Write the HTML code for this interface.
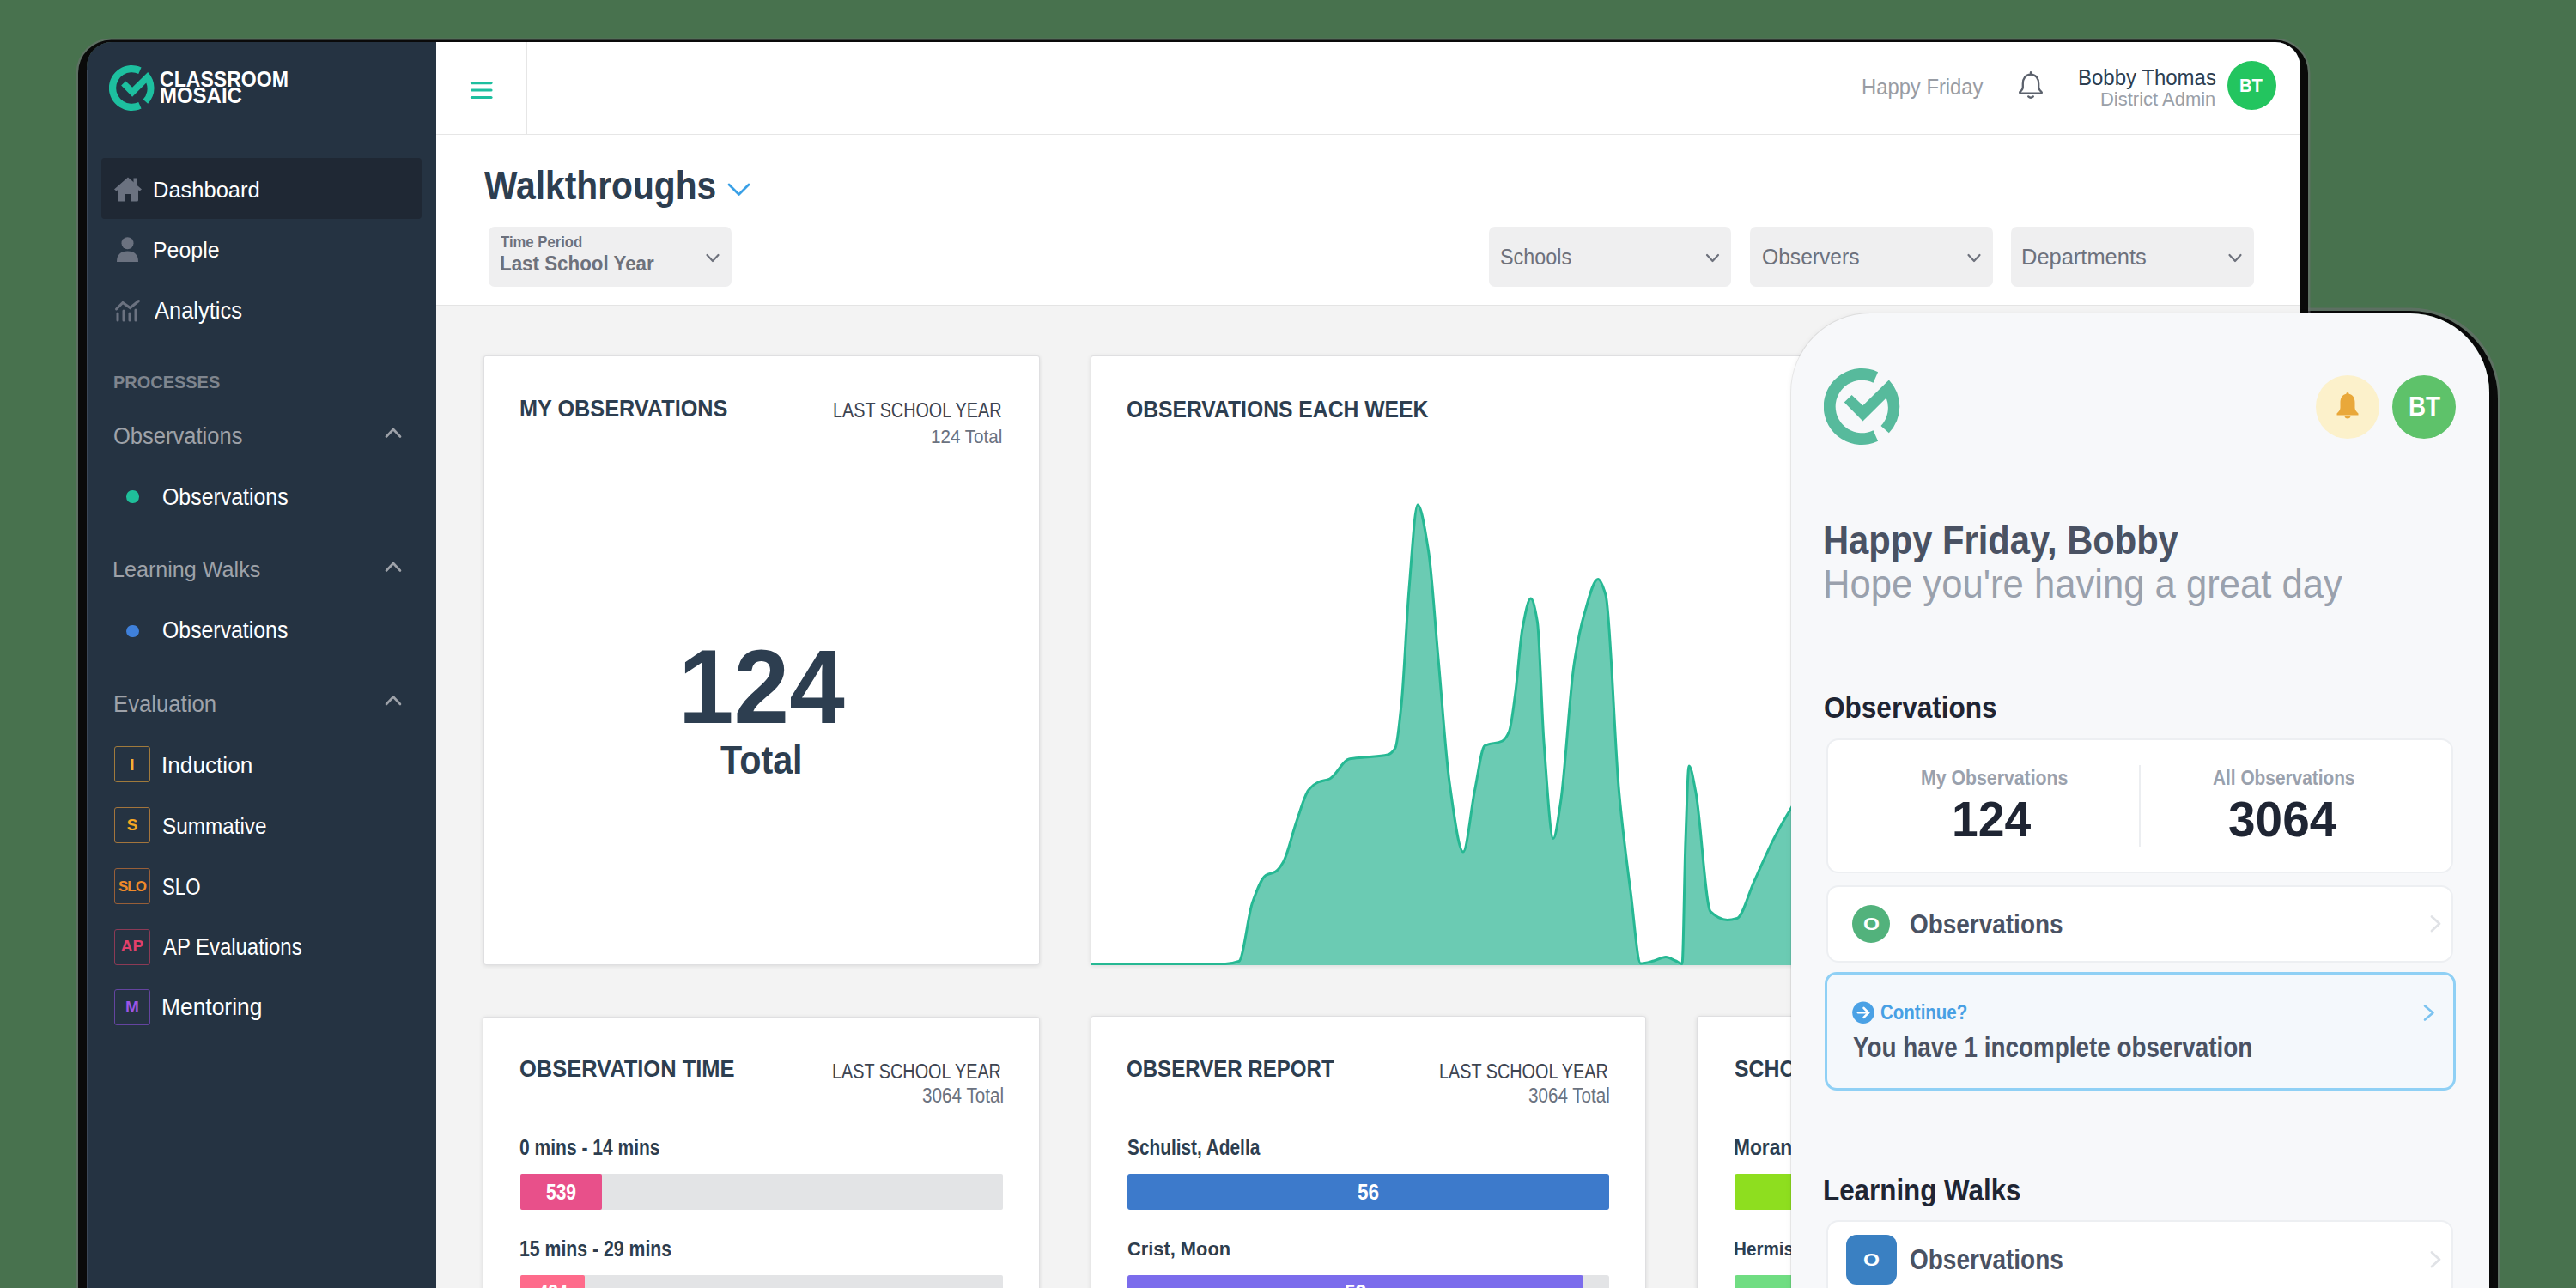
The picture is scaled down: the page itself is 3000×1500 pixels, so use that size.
<!DOCTYPE html>
<html><head><meta charset="utf-8">
<style>
html,body{margin:0;padding:0}
body{width:3000px;height:1500px;background:#48724e;position:relative;overflow:hidden;font-family:"Liberation Sans",sans-serif}
.a{position:absolute}
.t{position:absolute;white-space:nowrap;line-height:1;transform-origin:0 0}
.card{position:absolute;background:#fff;border:1px solid #dfdfe1;box-sizing:border-box;border-radius:3px;box-shadow:0 1px 5px rgba(0,0,0,0.10)}
.dd{position:absolute;background:#efeff0;border-radius:7px;top:263.5px;height:70px}
.box{position:absolute;left:133px;width:42px;height:42px;box-sizing:border-box;border:1.6px solid;border-radius:3px;font-weight:bold;text-align:center}
.mc{position:absolute;background:#fff;border:2.5px solid #edeff2;box-sizing:border-box;border-radius:14px}
</style></head>
<body>
<!-- shadows -->
<div class="a" style="left:2086px;top:365px;width:813px;height:1400px;border-radius:92px;box-shadow:0 7px 0 10px #0a0a0a,0 6px 0.5px 12.5px rgba(112,112,115,0.55)"></div>
<div class="a" style="left:101px;top:49px;width:2578px;height:1600px;border-radius:29px;box-shadow:-0.5px 7px 0 9.5px #0a0a0a,-0.5px 7.5px 0.5px 12px rgba(112,112,115,0.55)"></div>
<!-- desktop window -->
<div class="a" style="left:101px;top:49px;width:2578px;height:1600px;border-radius:29px;overflow:hidden;background:#253342">
  <div class="a" style="left:407px;top:300px;width:2171px;height:1300px;background:#f3f3f3"></div>
  <div class="a" style="left:0;top:32px;width:1px;height:1600px;background:#3b4757"></div>
  <div class="a" style="left:17px;top:135px;width:373px;height:71px;background:#1f2834;border-radius:4px"></div>
  <div class="a" style="left:407px;top:0;width:2171px;height:306px;background:#fff;border-bottom:1px solid #e4e4e4"></div>
  <div class="a" style="left:407px;top:107px;width:2171px;height:1px;background:#e6e6e6"></div>
  <div class="a" style="left:512px;top:0;width:1px;height:108px;background:#e6e6e6"></div>
</div>
<!-- logo -->
<svg class="a" style="left:127px;top:76px" width="53" height="53" viewBox="0 0 100 100">
 <g fill="#1dbf9f">
  <path d="M70.9,4.7 A50,50 0 1 0 70.9,95.3 L64.7,81.3 A34.6,34.6 0 1 1 64.7,18.7 Z"/>
  <path d="M26.7,44.5 L36.6,34.7 L51.1,48.7 L85.2,15.2 A50,50 0 0 1 85.2,84.6 L74.7,75.2 A34.6,34.6 0 0 0 81.7,38.8 L51.1,69.2 Z"/>
 </g>
</svg>
<!-- nav icons -->
<svg class="a" style="left:132px;top:205px" width="34" height="30" viewBox="0 0 34 30">
 <g fill="#6b7280">
  <path d="M1,15.5 L17,1.5 L33,15.5 L30.5,17.5 L17,6 L3.5,17.5 Z"/>
  <rect x="23.5" y="2.5" width="4.5" height="9"/>
  <path d="M5,14 L17,4 L29,14 L29,28 Q29,29.5 27.5,29.5 L21,29.5 L21,21 L13,21 L13,29.5 L6.5,29.5 Q5,29.5 5,28 Z"/>
 </g>
</svg>
<svg class="a" style="left:135px;top:276px" width="28" height="30" viewBox="0 0 28 30">
 <g fill="#6b7280"><circle cx="13.5" cy="7.3" r="7"/><path d="M1,29 Q1,16.5 13.5,16.5 Q26,16.5 26,29 Z"/></g>
</svg>
<svg class="a" style="left:133px;top:348px" width="32" height="28" viewBox="0 0 32 28">
 <g stroke="#6b7280" stroke-width="3" stroke-linecap="round" fill="none">
  <polyline points="2.5,12 10,4.5 18.5,10.5 28.5,2.5"/>
  <line x1="4" y1="17" x2="4" y2="25"/><line x1="11" y1="14" x2="11" y2="25"/><line x1="18" y1="17" x2="18" y2="25"/><line x1="25" y1="13" x2="25" y2="25"/>
 </g>
</svg>
<!-- sidebar chevrons -->
<svg class="a" style="left:446px;top:496px" width="24" height="340" viewBox="0 0 24 340">
 <g stroke="#9ea2a9" stroke-width="2.6" fill="none" stroke-linecap="round" stroke-linejoin="round">
  <polyline points="4,12.5 12,4 20,12.5"/>
  <polyline points="4,168.5 12,160 20,168.5"/>
  <polyline points="4,324 12,315.5 20,324"/>
 </g>
</svg>
<div class="a" style="left:147px;top:571px;width:14.5px;height:14.5px;border-radius:50%;background:#1fbf9a"></div>
<div class="a" style="left:147px;top:727.5px;width:14.5px;height:14.5px;border-radius:50%;background:#3f80da"></div>
<!-- eval boxes -->
<div class="box" style="top:868.7px;border-color:#a07a3c;color:#f2b233"></div>
<div class="box" style="top:940px;border-color:#a3753c;color:#f5a623"></div>
<div class="box" style="top:1010.6px;border-color:#985f38;color:#ee8a2a"></div>
<div class="box" style="top:1081.7px;border-color:#8c3a55;color:#e0406a"></div>
<div class="box" style="top:1151.8px;border-color:#6444a0;color:#9b55e6"></div>
<!-- hamburger -->
<svg class="a" style="left:545px;top:93px" width="31" height="24" viewBox="0 0 31 24">
 <g stroke="#1dbf9f" stroke-width="3.2" stroke-linecap="round"><line x1="4.5" y1="3.6" x2="27" y2="3.6"/><line x1="4.5" y1="12" x2="27" y2="12"/><line x1="4.5" y1="20.5" x2="27" y2="20.5"/></g>
</svg>
<!-- walkthroughs chevron -->
<svg class="a" style="left:846px;top:212px" width="30" height="19" viewBox="0 0 30 19">
 <polyline points="3,3 14.5,14.5 26,3" stroke="#3aa0e6" stroke-width="2.8" fill="none" stroke-linecap="round" stroke-linejoin="round"/>
</svg>
<!-- dropdowns -->
<div class="dd" style="left:569px;width:282.5px"></div>
<div class="dd" style="left:1734px;width:282.3px"></div>
<div class="dd" style="left:2038px;width:283px"></div>
<div class="dd" style="left:2342px;width:283px"></div>
<svg class="a" style="left:0;top:0" width="3000" height="340" viewBox="0 0 3000 340">
 <g stroke="#6d717c" stroke-width="2.2" fill="none" stroke-linecap="round" stroke-linejoin="round">
  <polyline points="823.5,297 830,304 836.5,297"/>
  <polyline points="1988,297 1994.5,304 2001,297"/>
  <polyline points="2292.5,297 2299,304 2305.5,297"/>
  <polyline points="2596.5,297 2603,304 2609.5,297"/>
 </g>
 <!-- bell -->
 <g stroke="#5b616c" stroke-width="2.3" fill="none" stroke-linecap="round" stroke-linejoin="round">
  <path d="M2365,86.6 C2359,86.6 2355.8,91.5 2355.8,97.5 L2355.8,101.5 C2355.8,104 2354.3,105.5 2352.5,107 C2351.8,107.6 2352.2,108.6 2353.2,108.6 L2376.8,108.6 C2377.8,108.6 2378.2,107.6 2377.5,107 C2375.7,105.5 2374.2,104 2374.2,101.5 L2374.2,97.5 C2374.2,91.5 2371,86.6 2365,86.6 Z"/>
  <line x1="2365" y1="84.2" x2="2365" y2="86.6"/>
  <path d="M2362.2,112.4 Q2365,115.2 2367.8,112.4"/>
 </g>
</svg>
<div class="a" style="left:2593.5px;top:71px;width:57px;height:57px;border-radius:50%;background:#23c55f"></div>
<!-- cards -->
<div class="card" style="left:562.5px;top:413.9px;width:648px;height:710.4px"></div>
<div class="card" style="left:1270px;top:413.9px;width:1353px;height:710.4px"></div>
<svg class="a" style="left:0;top:0" width="3000" height="1500" viewBox="0 0 3000 1500">
 <path d="M1270.0,1122.5 C1322.33,1122.50 1374.67,1122.50 1427.00,1122.50 C1432.27,1122.50 1437.53,1121.42 1442.80,1119.50 C1448.07,1117.58 1453.33,1065.62 1458.60,1051.00 C1463.73,1036.75 1468.87,1022.74 1474.00,1019.50 C1477.87,1017.06 1481.73,1017.34 1485.60,1015.00 C1488.60,1013.18 1491.60,1008.86 1494.60,1003.70 C1499.73,994.87 1504.87,970.84 1510.00,956.40 C1514.67,943.28 1519.33,925.69 1524.00,920.00 C1527.67,915.53 1531.33,912.61 1535.00,911.00 C1539.53,909.01 1544.07,908.98 1548.60,907.00 C1556.07,903.73 1563.53,885.45 1571.00,884.00 C1577.00,882.83 1583.00,882.67 1589.00,882.00 C1598.00,881.00 1607.00,881.04 1616.00,879.00 C1619.00,878.32 1622.00,875.90 1625.00,871.00 C1627.33,867.19 1629.67,843.25 1632.00,821.00 C1635.00,792.39 1638.00,721.70 1641.00,686.00 C1644.33,646.34 1647.67,588.00 1651.00,588.00 C1655.17,588.00 1659.33,615.37 1663.50,641.00 C1667.33,664.58 1671.17,724.78 1675.00,767.00 C1679.33,814.73 1683.67,880.50 1688.00,911.00 C1693.33,948.54 1698.67,992.00 1704.00,992.00 C1708.53,992.00 1713.07,942.03 1717.60,920.00 C1721.40,901.54 1725.20,870.72 1729.00,868.60 C1735.90,864.75 1742.80,866.49 1749.70,863.00 C1752.30,861.69 1754.90,858.00 1757.50,852.00 C1760.00,846.23 1762.50,824.06 1765.00,805.60 C1767.67,785.91 1770.33,746.02 1773.00,732.00 C1776.23,715.00 1779.47,697.00 1782.70,697.00 C1785.27,697.00 1787.83,708.86 1790.40,724.00 C1792.93,738.94 1795.47,829.89 1798.00,863.80 C1801.67,912.88 1805.33,976.40 1809.00,976.40 C1811.87,976.40 1814.73,952.31 1817.60,933.70 C1822.73,900.38 1827.87,808.51 1833.00,774.60 C1836.93,748.62 1840.87,729.52 1844.80,716.00 C1850.20,697.44 1855.60,674.50 1861.00,674.50 C1864.00,674.50 1867.00,682.85 1870.00,693.00 C1875.17,710.48 1880.33,866.05 1885.50,922.00 C1890.00,970.73 1894.50,1003.42 1899.00,1038.50 C1902.90,1068.90 1906.80,1122.00 1910.70,1122.00 C1915.80,1122.00 1920.90,1120.25 1926.00,1119.00 C1930.67,1117.86 1935.33,1114.50 1940.00,1114.50 C1943.83,1114.50 1947.67,1117.36 1951.50,1119.00 C1954.00,1120.07 1956.50,1122.50 1959.00,1122.50 C1960.33,1122.50 1961.67,1016.27 1963.00,980.00 C1964.33,943.73 1965.67,892.00 1967.00,892.00 C1969.60,892.00 1972.20,909.01 1974.80,922.00 C1980.53,950.65 1986.27,1056.25 1992.00,1061.70 C1998.53,1067.91 2005.07,1071.40 2011.60,1071.40 C2015.40,1071.40 2019.20,1070.59 2023.00,1069.50 C2029.57,1067.61 2036.13,1041.02 2042.70,1026.80 C2050.47,1009.98 2058.23,991.48 2066.00,976.40 C2072.20,964.36 2078.40,954.08 2084.60,943.40 C2093.07,928.81 2101.53,915.13 2110.00,901.00 L2110,1124 L1270,1124 Z" fill="#6bcbb3"/>
 <path d="M1270.0,1122.5 C1322.33,1122.50 1374.67,1122.50 1427.00,1122.50 C1432.27,1122.50 1437.53,1121.42 1442.80,1119.50 C1448.07,1117.58 1453.33,1065.62 1458.60,1051.00 C1463.73,1036.75 1468.87,1022.74 1474.00,1019.50 C1477.87,1017.06 1481.73,1017.34 1485.60,1015.00 C1488.60,1013.18 1491.60,1008.86 1494.60,1003.70 C1499.73,994.87 1504.87,970.84 1510.00,956.40 C1514.67,943.28 1519.33,925.69 1524.00,920.00 C1527.67,915.53 1531.33,912.61 1535.00,911.00 C1539.53,909.01 1544.07,908.98 1548.60,907.00 C1556.07,903.73 1563.53,885.45 1571.00,884.00 C1577.00,882.83 1583.00,882.67 1589.00,882.00 C1598.00,881.00 1607.00,881.04 1616.00,879.00 C1619.00,878.32 1622.00,875.90 1625.00,871.00 C1627.33,867.19 1629.67,843.25 1632.00,821.00 C1635.00,792.39 1638.00,721.70 1641.00,686.00 C1644.33,646.34 1647.67,588.00 1651.00,588.00 C1655.17,588.00 1659.33,615.37 1663.50,641.00 C1667.33,664.58 1671.17,724.78 1675.00,767.00 C1679.33,814.73 1683.67,880.50 1688.00,911.00 C1693.33,948.54 1698.67,992.00 1704.00,992.00 C1708.53,992.00 1713.07,942.03 1717.60,920.00 C1721.40,901.54 1725.20,870.72 1729.00,868.60 C1735.90,864.75 1742.80,866.49 1749.70,863.00 C1752.30,861.69 1754.90,858.00 1757.50,852.00 C1760.00,846.23 1762.50,824.06 1765.00,805.60 C1767.67,785.91 1770.33,746.02 1773.00,732.00 C1776.23,715.00 1779.47,697.00 1782.70,697.00 C1785.27,697.00 1787.83,708.86 1790.40,724.00 C1792.93,738.94 1795.47,829.89 1798.00,863.80 C1801.67,912.88 1805.33,976.40 1809.00,976.40 C1811.87,976.40 1814.73,952.31 1817.60,933.70 C1822.73,900.38 1827.87,808.51 1833.00,774.60 C1836.93,748.62 1840.87,729.52 1844.80,716.00 C1850.20,697.44 1855.60,674.50 1861.00,674.50 C1864.00,674.50 1867.00,682.85 1870.00,693.00 C1875.17,710.48 1880.33,866.05 1885.50,922.00 C1890.00,970.73 1894.50,1003.42 1899.00,1038.50 C1902.90,1068.90 1906.80,1122.00 1910.70,1122.00 C1915.80,1122.00 1920.90,1120.25 1926.00,1119.00 C1930.67,1117.86 1935.33,1114.50 1940.00,1114.50 C1943.83,1114.50 1947.67,1117.36 1951.50,1119.00 C1954.00,1120.07 1956.50,1122.50 1959.00,1122.50 C1960.33,1122.50 1961.67,1016.27 1963.00,980.00 C1964.33,943.73 1965.67,892.00 1967.00,892.00 C1969.60,892.00 1972.20,909.01 1974.80,922.00 C1980.53,950.65 1986.27,1056.25 1992.00,1061.70 C1998.53,1067.91 2005.07,1071.40 2011.60,1071.40 C2015.40,1071.40 2019.20,1070.59 2023.00,1069.50 C2029.57,1067.61 2036.13,1041.02 2042.70,1026.80 C2050.47,1009.98 2058.23,991.48 2066.00,976.40 C2072.20,964.36 2078.40,954.08 2084.60,943.40 C2093.07,928.81 2101.53,915.13 2110.00,901.00" fill="none" stroke="#26b893" stroke-width="3"/>
</svg>
<div class="card" style="left:562px;top:1183.5px;width:648.6px;height:400px"></div>
<div class="card" style="left:1269.8px;top:1183px;width:647.4px;height:400px"></div>
<div class="card" style="left:1976px;top:1183px;width:647px;height:400px"></div>
<!-- bars -->
<div class="a" style="left:606px;top:1367px;width:561.7px;height:41.5px;background:#e3e4e6;border-radius:2px"></div>
<div class="a" style="left:606px;top:1367px;width:95px;height:41.5px;background:#e8508a;border-radius:2px"></div>
<div class="a" style="left:606px;top:1484.5px;width:561.7px;height:41.5px;background:#e3e4e6;border-radius:2px"></div>
<div class="a" style="left:606px;top:1484.5px;width:75px;height:41.5px;background:#fe6b8b;border-radius:2px"></div>
<div class="a" style="left:1313px;top:1367px;width:561px;height:42.4px;background:#3d7acb;border-radius:3px"></div>
<div class="a" style="left:1313px;top:1485px;width:561px;height:42px;background:#e3e4e6;border-radius:3px"></div>
<div class="a" style="left:1313px;top:1485px;width:531px;height:42px;background:#7b6cec;border-radius:3px"></div>
<div class="a" style="left:2020px;top:1367px;width:200px;height:42.4px;background:#8ede1f;border-radius:3px"></div>
<div class="a" style="left:2020px;top:1485px;width:200px;height:42px;background:#70dd82;border-radius:3px"></div>
<div class="t" style="left:186.11px;top:79.63px;font-size:25.94px;font-weight:bold;color:#ffffff;transform:scaleX(0.8892);">CLASSROOM</div>
<div class="t" style="left:186.03px;top:100.36px;font-size:24.85px;font-weight:bold;color:#ffffff;transform:scaleX(0.9651);">MOSAIC</div>
<div class="t" style="left:177.84px;top:207.57px;font-size:26.02px;font-weight:normal;color:#ffffff;transform:scaleX(0.9795);">Dashboard</div>
<div class="t" style="left:178.12px;top:278.20px;font-size:26.45px;font-weight:normal;color:#ffffff;transform:scaleX(0.9420);">People</div>
<div class="t" style="left:180.00px;top:348.76px;font-size:26.74px;font-weight:normal;color:#ffffff;transform:scaleX(0.9521);">Analytics</div>
<div class="t" style="left:132.42px;top:434.77px;font-size:20.35px;font-weight:bold;color:#7f858e;transform:scaleX(0.9811);">PROCESSES</div>
<div class="t" style="left:132.45px;top:494.76px;font-size:26.74px;font-weight:normal;color:#9ea2a9;transform:scaleX(0.9549);">Observations</div>
<div class="t" style="left:189.10px;top:564.62px;font-size:27.62px;font-weight:normal;color:#ffffff;transform:scaleX(0.9014);">Observations</div>
<div class="t" style="left:131.11px;top:650.48px;font-size:26.60px;font-weight:normal;color:#9ea2a9;transform:scaleX(0.9450);">Learning Walks</div>
<div class="t" style="left:189.08px;top:721.23px;font-size:26.89px;font-weight:normal;color:#ffffff;transform:scaleX(0.9242);">Observations</div>
<div class="t" style="left:131.90px;top:806.71px;font-size:27.03px;font-weight:normal;color:#9ea2a9;transform:scaleX(0.9518);">Evaluation</div>
<div class="t" style="left:188.02px;top:877.60px;font-size:26.45px;font-weight:normal;color:#ffffff;transform:scaleX(0.9904);">Induction</div>
<div class="t" style="left:189.07px;top:948.77px;font-size:26.02px;font-weight:normal;color:#ffffff;transform:scaleX(0.9333);">Summative</div>
<div class="t" style="left:189.19px;top:1018.62px;font-size:27.62px;font-weight:normal;color:#ffffff;transform:scaleX(0.8053);">SLO</div>
<div class="t" style="left:190.00px;top:1089.44px;font-size:27.47px;font-weight:normal;color:#ffffff;transform:scaleX(0.8698);">AP Evaluations</div>
<div class="t" style="left:188.05px;top:1159.91px;font-size:27.03px;font-weight:normal;color:#ffffff;transform:scaleX(0.9769);">Mentoring</div>
<div class="t" style="left:2168.06px;top:88.89px;font-size:25.87px;font-weight:normal;color:#989ca4;transform:scaleX(0.9200);">Happy Friday</div>
<div class="t" style="left:2420.10px;top:78.39px;font-size:25.29px;font-weight:normal;color:#2d3e50;transform:scaleX(0.9487);">Bobby Thomas</div>
<div class="t" style="left:2446.39px;top:104.74px;font-size:21.80px;font-weight:normal;color:#9aa0a8;transform:scaleX(1.0082);">District Admin</div>
<div class="t" style="left:2607.91px;top:88.30px;font-size:22.67px;font-weight:bold;color:#ffffff;transform:scaleX(0.8923);">BT</div>
<div class="t" style="left:564.00px;top:193.73px;font-size:45.78px;font-weight:bold;color:#2d3e50;transform:scaleX(0.8909);">Walkthroughs</div>
<div class="t" style="left:583.00px;top:274.23px;font-size:17.44px;font-weight:bold;color:#6d717c;transform:scaleX(0.9571);">Time Period</div>
<div class="t" style="left:582.09px;top:294.50px;font-size:24.56px;font-weight:bold;color:#6d717c;transform:scaleX(0.9105);">Last School Year</div>
<div class="t" style="left:1747.12px;top:285.80px;font-size:26.45px;font-weight:normal;color:#6d717c;transform:scaleX(0.8833);">Schools</div>
<div class="t" style="left:2051.67px;top:285.80px;font-size:26.45px;font-weight:normal;color:#6d717c;transform:scaleX(0.9311);">Observers</div>
<div class="t" style="left:2354.07px;top:285.80px;font-size:26.45px;font-weight:normal;color:#6d717c;transform:scaleX(0.9629);">Departments</div>
<div class="t" style="left:605.06px;top:462.71px;font-size:27.03px;font-weight:bold;color:#2d3e50;transform:scaleX(0.9353);">MY OBSERVATIONS</div>
<div class="t" style="left:969.76px;top:466.94px;font-size:23.69px;font-weight:normal;color:#3d4451;transform:scaleX(0.8355);">LAST SCHOOL YEAR</div>
<div class="t" style="left:1084.10px;top:496.86px;font-size:22.97px;font-weight:normal;color:#6b7280;transform:scaleX(0.8983);">124 Total</div>
<div class="t" style="left:790.32px;top:739.69px;font-size:121.66px;font-weight:bold;color:#2d3e50;transform:scaleX(0.9544);">124</div>
<div class="t" style="left:839.00px;top:862.12px;font-size:46.51px;font-weight:bold;color:#2d3e50;transform:scaleX(0.8882);">Total</div>
<div class="t" style="left:1312.11px;top:462.62px;font-size:27.62px;font-weight:bold;color:#2d3e50;transform:scaleX(0.8944);">OBSERVATIONS EACH WEEK</div>
<div class="t" style="left:605.48px;top:1230.62px;font-size:27.62px;font-weight:bold;color:#2d3e50;transform:scaleX(0.9226);">OBSERVATION TIME</div>
<div class="t" style="left:968.88px;top:1235.57px;font-size:24.13px;font-weight:normal;color:#3d4451;transform:scaleX(0.8221);">LAST SCHOOL YEAR</div>
<div class="t" style="left:1073.60px;top:1265.06px;font-size:23.55px;font-weight:normal;color:#6b7280;transform:scaleX(0.8793);">3064 Total</div>
<div class="t" style="left:605.18px;top:1323.94px;font-size:25.58px;font-weight:bold;color:#2d3e50;transform:scaleX(0.8216);">0 mins - 14 mins</div>
<div class="t" style="left:636.00px;top:1375.59px;font-size:25.29px;font-weight:bold;color:#ffffff;transform:scaleX(0.8310);">539</div>
<div class="t" style="left:605.17px;top:1441.72px;font-size:25.73px;font-weight:bold;color:#2d3e50;transform:scaleX(0.8259);">15 mins - 29 mins</div>
<div class="t" style="left:1311.83px;top:1230.62px;font-size:27.62px;font-weight:bold;color:#2d3e50;transform:scaleX(0.8719);">OBSERVER REPORT</div>
<div class="t" style="left:1675.78px;top:1235.57px;font-size:24.13px;font-weight:normal;color:#3d4451;transform:scaleX(0.8217);">LAST SCHOOL YEAR</div>
<div class="t" style="left:1780.00px;top:1265.06px;font-size:23.55px;font-weight:normal;color:#6b7280;transform:scaleX(0.8755);">3064 Total</div>
<div class="t" style="left:1313.00px;top:1323.99px;font-size:25.29px;font-weight:bold;color:#2d3e50;transform:scaleX(0.8235);">Schulist, Adella</div>
<div class="t" style="left:1581.00px;top:1375.59px;font-size:25.29px;font-weight:bold;color:#ffffff;transform:scaleX(0.8909);">56</div>
<div class="t" style="left:1313.00px;top:1443.36px;font-size:22.97px;font-weight:bold;color:#2d3e50;transform:scaleX(0.9504);">Crist, Moon</div>
<div class="t" style="left:2019.60px;top:1230.62px;font-size:27.62px;font-weight:bold;color:#2d3e50;transform:scaleX(0.9000);">SCHOOL REPORT</div>
<div class="t" style="left:2018.70px;top:1323.99px;font-size:25.29px;font-weight:bold;color:#2d3e50;transform:scaleX(0.9000);">Moran, Lakin</div>
<div class="t" style="left:2018.70px;top:1443.36px;font-size:22.97px;font-weight:bold;color:#2d3e50;transform:scaleX(0.9000);">Hermiston, Lee</div>
<div class="t" style="left:627.00px;top:1493.46px;font-size:25.44px;font-weight:bold;color:#ffffff;transform:scaleX(0.8042);">434</div>
<div class="t" style="left:1566.00px;top:1493.46px;font-size:25.44px;font-weight:bold;color:#ffffff;transform:scaleX(0.8885);">52</div>
<!-- eval letters -->
<div class="t" style="left:133px;top:880.5px;width:42px;text-align:center;font-size:19px;font-weight:bold;color:#f2b233">I</div>
<div class="t" style="left:133px;top:950.5px;width:42px;text-align:center;font-size:19px;font-weight:bold;color:#f5a623">S</div>
<div class="t" style="left:133px;top:1023.5px;width:42px;text-align:center;font-size:17px;font-weight:bold;color:#ee8a2a;letter-spacing:-1px">SLO</div>
<div class="t" style="left:133px;top:1092px;width:42px;text-align:center;font-size:19px;font-weight:bold;color:#e0406a">AP</div>
<div class="t" style="left:133px;top:1162.5px;width:42px;text-align:center;font-size:19px;font-weight:bold;color:#9b55e6">M</div>
<!-- mobile panel -->
<div class="a" style="left:2086px;top:365px;width:813px;height:1400px;border-radius:92px;background:#f7f8fa;box-shadow:0 0 0 1px rgba(0,0,0,0.07),-1px 0 6px rgba(0,0,0,0.05)"></div>
<svg class="a" style="left:2124px;top:429px" width="89" height="89" viewBox="0 0 100 100">
 <g fill="#57ba9c">
  <path d="M70.9,4.7 A50,50 0 1 0 70.9,95.3 L64.7,81.3 A34.6,34.6 0 1 1 64.7,18.7 Z"/>
  <path d="M26.7,44.5 L36.6,34.7 L51.1,48.7 L85.2,15.2 A50,50 0 0 1 85.2,84.6 L74.7,75.2 A34.6,34.6 0 0 0 81.7,38.8 L51.1,69.2 Z"/>
 </g>
</svg>
<div class="a" style="left:2697px;top:436.6px;width:74px;height:74px;border-radius:50%;background:#fcf1cb"></div>
<svg class="a" style="left:2718px;top:454.5px" width="32" height="34" viewBox="0 0 32 34">
 <g fill="#e9a83a">
  <path d="M16,2 C17,2 17.6,2.8 17.6,3.8 C22.5,4.8 24.5,9 24.5,14 L24.5,20 C24.5,23 27,25 28.5,26.5 L28.5,28.5 L3.5,28.5 L3.5,26.5 C5,25 7.5,23 7.5,20 L7.5,14 C7.5,9 9.5,4.8 14.4,3.8 C14.4,2.8 15,2 16,2 Z"/>
  <path d="M12.5,29.5 L19.5,29.5 C19.5,31.5 18,32.5 16,32.5 C14,32.5 12.5,31.5 12.5,29.5 Z"/>
 </g>
</svg>
<div class="a" style="left:2785.6px;top:436.6px;width:74px;height:74px;border-radius:50%;background:#5ec26a"></div>
<div class="mc" style="left:2127px;top:860px;width:730px;height:157px"></div>
<div class="a" style="left:2490.5px;top:891px;width:2px;height:95px;background:#eceef1"></div>
<div class="mc" style="left:2127px;top:1031px;width:730px;height:90px"></div>
<div class="a" style="left:2157px;top:1054px;width:44px;height:44px;border-radius:50%;background:#52b27c"></div>
<div class="a" style="left:2125px;top:1132px;width:734.5px;height:138px;box-sizing:border-box;border:3px solid #8fd0f5;border-radius:14px;background:#f4f8fc"></div>
<div class="mc" style="left:2127px;top:1421px;width:730px;height:200px"></div>
<div class="a" style="left:2150px;top:1438px;width:58.6px;height:58px;border-radius:12px;background:#3a80c2"></div>
<svg class="a" style="left:2150px;top:1160px" width="700" height="330" viewBox="2150 1160 700 330">
 <circle cx="2170" cy="1179.3" r="12.8" fill="#4aa1e5"/>
 <g stroke="#fff" stroke-width="2.6" fill="none" stroke-linecap="round" stroke-linejoin="round"><line x1="2164" y1="1179.3" x2="2176" y2="1179.3"/><polyline points="2170.5,1173.8 2176,1179.3 2170.5,1184.8"/></g>
 <polyline points="2824,1171.5 2833.5,1179.5 2824,1187.5" stroke="#7cc3f0" stroke-width="2.6" fill="none" stroke-linecap="round" stroke-linejoin="round"/>
 <polyline points="2832,1458.5 2841,1466.8 2832,1475" stroke="#e0e2e6" stroke-width="2.8" fill="none" stroke-linecap="round" stroke-linejoin="round"/>
</svg>
<svg class="a" style="left:2820px;top:1060px" width="30" height="30" viewBox="2820 1060 30 30">
 <polyline points="2832,1067.5 2841,1075.8 2832,1084" stroke="#e0e2e6" stroke-width="2.8" fill="none" stroke-linecap="round" stroke-linejoin="round"/>
</svg>
<div class="t" style="left:2123.34px;top:605.13px;font-size:47.09px;font-weight:bold;color:#4a5263;transform:scaleX(0.8854);">Happy Friday, Bobby</div>
<div class="t" style="left:2123.14px;top:658.23px;font-size:45.78px;font-weight:normal;color:#9aa1ad;transform:scaleX(0.9529);">Hope you're having a great day</div>
<div class="t" style="left:2804.69px;top:458.91px;font-size:30.81px;font-weight:bold;color:#ffffff;transform:scaleX(0.9047);">BT</div>
<div class="t" style="left:2123.60px;top:807.46px;font-size:34.88px;font-weight:bold;color:#1f2533;transform:scaleX(0.9048);">Observations</div>
<div class="t" style="left:2237.12px;top:894.17px;font-size:24.13px;font-weight:bold;color:#9aa1ad;transform:scaleX(0.8814);">My Observations</div>
<div class="t" style="left:2273.15px;top:924.77px;font-size:58.14px;font-weight:bold;color:#1f2533;transform:scaleX(0.9508);">124</div>
<div class="t" style="left:2577.00px;top:894.17px;font-size:24.13px;font-weight:bold;color:#9aa1ad;transform:scaleX(0.8630);">All Observations</div>
<div class="t" style="left:2595.02px;top:924.77px;font-size:58.14px;font-weight:bold;color:#1f2533;transform:scaleX(0.9769);">3064</div>
<div class="t" style="left:2170.00px;top:1065.77px;font-size:20.35px;font-weight:bold;color:#ffffff;transform:scaleX(1.2000);">O</div>
<div class="t" style="left:2223.63px;top:1059.93px;font-size:31.98px;font-weight:bold;color:#4a5263;transform:scaleX(0.8739);">Observations</div>
<div class="t" style="left:2190.17px;top:1167.08px;font-size:24.71px;font-weight:bold;color:#48a0e4;transform:scaleX(0.8294);">Continue?</div>
<div class="t" style="left:2158.00px;top:1204.43px;font-size:32.56px;font-weight:bold;color:#4a5263;transform:scaleX(0.8555);">You have 1 incomplete observation</div>
<div class="t" style="left:2122.70px;top:1369.46px;font-size:34.88px;font-weight:bold;color:#1f2533;transform:scaleX(0.8990);">Learning Walks</div>
<div class="t" style="left:2170.00px;top:1456.77px;font-size:20.35px;font-weight:bold;color:#ffffff;transform:scaleX(1.2000);">O</div>
<div class="t" style="left:2223.64px;top:1450.81px;font-size:32.70px;font-weight:bold;color:#4a5263;transform:scaleX(0.8562);">Observations</div>
</body></html>
